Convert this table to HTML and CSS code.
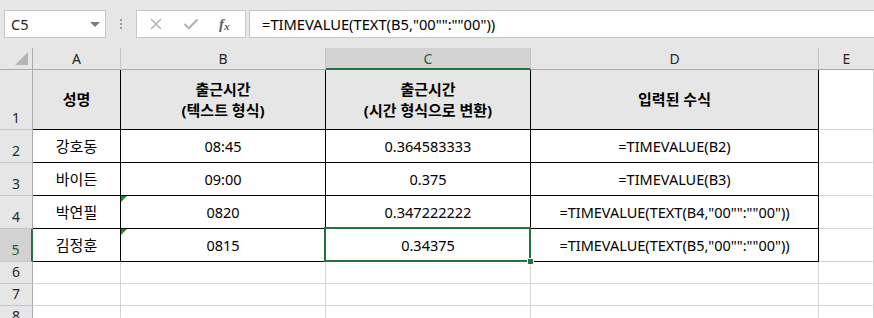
FILE: index.html
```html
<!DOCTYPE html>
<html lang="ko">
<head>
<meta charset="utf-8">
<title>Sheet</title>
<link rel="stylesheet" href="styles.css">
</head>
<body>
<div class="fbar">
  <div class="namebox"><span class="nb-text">C5</span><span class="caret"></span></div>
  <div class="dots"><i></i><i></i><i></i></div>
  <div class="fbtns">
    <svg class="ic-x" width="12" height="12" viewBox="0 0 12 12"><path d="M1 1 L11 11 M11 1 L1 11" stroke="#b4b4b4" stroke-width="1.6" fill="none"/></svg>
    <svg class="ic-ok" width="16" height="12" viewBox="0 0 16 12"><path d="M1.5 6 L5.8 10.2 L14.5 1.5" stroke="#b4b4b4" stroke-width="2.2" fill="none"/></svg>
    <span class="ic-fx">f<sub>x</sub></span>
  </div>
  <div class="finput">=TIMEVALUE(TEXT(B5,"00"":""00"))</div>
</div>
<div class="sheet">
  <div class="corner"><span class="tri"></span></div>
  <div class="ch">A</div>
  <div class="ch">B</div>
  <div class="ch sel-col">C</div>
  <div class="ch">D</div>
  <div class="ch last">E</div>

  <div class="rh">1</div>
  <div class="c t th ko">성명</div>
  <div class="c t th ko">출근시간<br>(텍스트 형식)</div>
  <div class="c t th ko">출근시간<br>(시간 형식으로 변환)</div>
  <div class="c t th ko">입력된 수식</div>
  <div class="c"></div>

  <div class="rh">2</div>
  <div class="c t ko">강호동</div>
  <div class="c t">08:45</div>
  <div class="c t">0.364583333</div>
  <div class="c t">=TIMEVALUE(B2)</div>
  <div class="c"></div>

  <div class="rh">3</div>
  <div class="c t ko">바이든</div>
  <div class="c t">09:00</div>
  <div class="c t">0.375</div>
  <div class="c t">=TIMEVALUE(B3)</div>
  <div class="c"></div>

  <div class="rh">4</div>
  <div class="c t ko">박연필</div>
  <div class="c t err">0820</div>
  <div class="c t">0.347222222</div>
  <div class="c t">=TIMEVALUE(TEXT(B4,"00"":""00"))</div>
  <div class="c"></div>

  <div class="rh sel-row">5</div>
  <div class="c t ko">김정훈</div>
  <div class="c t err">0815</div>
  <div class="c t active">0.34375<span class="selbox"></span><span class="handle"></span></div>
  <div class="c t">=TIMEVALUE(TEXT(B5,"00"":""00"))</div>
  <div class="c"></div>

  <div class="rh">6</div>
  <div class="c"></div><div class="c"></div><div class="c"></div><div class="c"></div><div class="c"></div>
  <div class="rh">7</div>
  <div class="c"></div><div class="c"></div><div class="c"></div><div class="c"></div><div class="c"></div>
  <div class="rh">8</div>
  <div class="c"></div><div class="c"></div><div class="c"></div><div class="c"></div><div class="c"></div>
</div>
</body>
</html>
```

FILE: styles.css
```css
* { box-sizing: border-box; }
html, body { margin: 0; padding: 0; background: #ffffff; overflow: hidden; }
body {
  font-family: "Noto Sans", "Noto Sans CJK KR", sans-serif;
  font-size: 14.5px;
  color: #000;
  width: 874px;
  height: 318px;
}

/* formula bar */
.fbar {
  height: 48px;
  background: #e6e6e6;
  display: flex;
  align-items: flex-start;
  padding-top: 10px;
}
.namebox {
  margin-left: 4px;
  width: 102px;
  height: 28px;
  background: #fff;
  border: 1px solid #c6c6c6;
  display: flex;
  align-items: center;
  justify-content: space-between;
  padding: 0 5px 0 6px;
  font-size: 14.5px;
  color: #222;
}
.caret {
  width: 0; height: 0;
  border-left: 5px solid transparent;
  border-right: 5px solid transparent;
  border-top: 5px solid #7a7a7a;
}
.dots {
  width: 30px;
  height: 28px;
  display: flex;
  flex-direction: column;
  align-items: center;
  justify-content: center;
  gap: 2px;
}
.dots i { display: block; width: 2px; height: 2px; background: #9a9a9a; }
.fbtns {
  width: 110px;
  height: 28px;
  background: #fff;
  border: 1px solid #c6c6c6;
  display: flex;
  align-items: center;
  padding-left: 13px;
}
.ic-ok { margin-left: 21px; }
.ic-fx {
  margin-left: 20px;
  font-family: "Liberation Serif", serif;
  font-style: italic;
  font-weight: bold;
  font-size: 15px;
  color: #5e5e5e;
  line-height: 1;
}
.ic-fx sub { font-size: 11px; vertical-align: -1px; }
.finput {
  flex: 1;
  margin-left: 3px;
  height: 28px;
  background: #fff;
  border: 1px solid #c6c6c6;
  border-right: none;
  padding-left: 12px;
  display: flex;
  align-items: center;
  font-size: 14.7px;
}

/* sheet grid */
.sheet {
  display: grid;
  grid-template-columns: 33px 88px 205px 205px 288px 1fr;
  grid-template-rows: 22px 60px 33px 33px 33px 33px 22px 22px 22px;
}
.corner {
  background: #e6e6e6;
  border-right: 1px solid #ababab;
  border-bottom: 1px solid #ababab;
  position: relative;
}
.tri {
  position: absolute;
  right: 4px;
  bottom: 4px;
  width: 0; height: 0;
  border-left: 13px solid transparent;
  border-bottom: 13px solid #b4b4b4;
}
.ch {
  background: #e6e6e6;
  border-right: 1px solid #c6c6c6;
  border-bottom: 1px solid #ababab;
  display: flex;
  align-items: center;
  justify-content: center;
  color: #262626;
  font-size: 14px;
}
.ch.last { border-right: none; }
.ch.sel-col {
  background: #d2d2d2;
  border-bottom: 2px solid #217346;
  color: #1e5e3a;
}
.rh {
  background: #e6e6e6;
  border-right: 1px solid #ababab;
  border-bottom: 1px solid #c6c6c6;
  display: flex;
  align-items: flex-end;
  justify-content: center;
  padding-bottom: 2px;
  color: #262626;
  font-size: 14px;
  line-height: 18px;
}
.rh.sel-row {
  background: #d2d2d2;
  border-right: 2px solid #217346;
  color: #1e5e3a;
}
.c {
  border-right: 1px solid #d4d4d4;
  border-bottom: 1px solid #d4d4d4;
  display: flex;
  align-items: center;
  justify-content: center;
  text-align: center;
  line-height: 21px;
  white-space: nowrap;
}
.c.t { border-right-color: #000; border-bottom-color: #000; }
.c.th { background: #e7e6e6; font-weight: bold; }
.c.ko { font-size: 15px; }
.c.err { position: relative; }
.c.err::before {
  content: "";
  position: absolute;
  left: 0; top: 0;
  width: 0; height: 0;
  border-top: 6px solid #1e8a3a;
  border-right: 6px solid transparent;
}
.c.active { position: relative; }
.selbox {
  position: absolute;
  left: -2px;
  top: -2px;
  width: 207px;
  height: 35px;
  border: 2px solid #217346;
}
.handle {
  position: absolute;
  left: 201px;
  top: 29px;
  width: 7px;
  height: 7px;
  background: #217346;
  border: 1px solid #fff;
}
```
